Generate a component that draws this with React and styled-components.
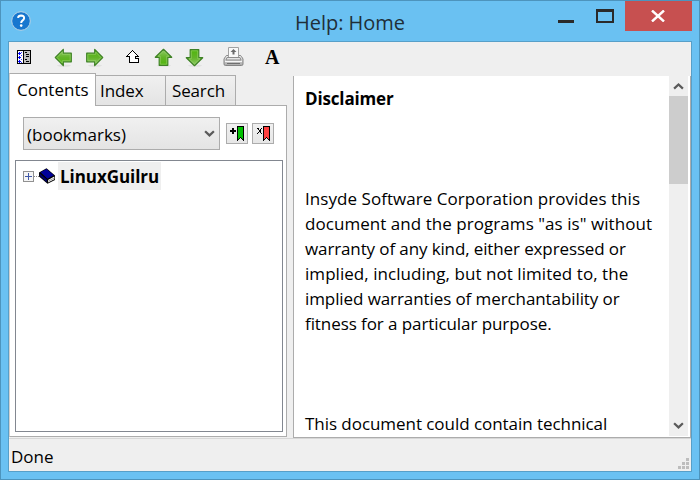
import React from 'react';
import styled, { createGlobalStyle } from 'styled-components';

const Global = createGlobalStyle`
  * { box-sizing: border-box; }
  html, body { margin: 0; padding: 0; }
  body { width: 700px; height: 480px; overflow: hidden; }
  svg { display: block; flex: none; }
`;

const Window = styled.div`
  width: 700px;
  height: 480px;
  display: flex;
  flex-direction: column;
  border: 1px solid #4d94bd;
  background: #6ac1f2;
  font-family: 'Open Sans', 'Noto Sans', sans-serif;
  font-size: 17px;
  color: #000;
`;

const TitleBar = styled.header`
  display: grid;
  grid-template-columns: 40px 1fr auto;
  height: 40px;
  padding: 0 7px 0 10px;
`;

const HelpIcon = styled.svg`
  margin-top: 9px;
`;

const Title = styled.h1`
  margin: 0;
  padding: 8px 0 0 244px;
  font-size: 20px;
  font-weight: 400;
  line-height: 27px;
  letter-spacing: -0.02px;
  color: #1f2f38;
  white-space: nowrap;
`;

const WindowButtons = styled.div`
  display: flex;
`;

const MinimizeMark = styled.span`
  width: 16px;
  height: 3px;
  margin: 19px 22px 0 0;
  background: #2a2a2a;
`;

const MaximizeMark = styled.span`
  width: 18px;
  height: 14px;
  margin: 8px 11px 0 0;
  border: 2px solid #2a2a2a;
  border-top-width: 3px;
`;

const CloseButton = styled.button`
  width: 67px;
  height: 30px;
  display: flex;
  justify-content: center;
  padding: 9px 1px 0 0;
  border: 0;
  background: #c75050;
`;

const Client = styled.main`
  flex: 1;
  display: flex;
  flex-direction: column;
  margin: 0 7px 7px;
  border: 1px solid #579fc8;
  background: #efefef;
`;

const Toolbar = styled.nav`
  height: 31px;
  display: flex;
  align-items: center;
  padding-left: 8px;
`;

const Tool = styled.span`
  display: flex;
  margin-right: ${(p) => p.$gap}px;
  padding-bottom: ${(p) => p.$raise || 0}px;
`;

const Workspace = styled.div`
  height: 365px;
  display: flex;
  gap: 6px;
`;

const Sidebar = styled.section`
  width: 278px;
  display: flex;
  flex-direction: column;
`;

const Tabs = styled.div`
  height: 32px;
  display: flex;
  align-items: flex-end;
`;

const Tab = styled.button`
  width: ${(p) => p.$width}px;
  height: ${(p) => (p.$active ? 33 : 30)}px;
  margin: 0 0 ${(p) => (p.$active ? -1 : 0)}px ${(p) => (p.$joined ? -1 : 0)}px;
  padding: 0 0 0 ${(p) => p.$inset}px;
  border: 1px solid #acacac;
  border-bottom: 0;
  border-left-color: ${(p) => (p.$active ? '#d0d0d0' : '#acacac')};
  position: relative;
  background: ${(p) => (p.$active ? '#fff' : 'linear-gradient(#f0f0f0, #e4e4e4)')};
  font: inherit;
  line-height: ${(p) => (p.$active ? 30 : 30)}px;
  letter-spacing: ${(p) => p.$tracking || 0}px;
  text-align: left;
  color: #000;
`;

const TabPanel = styled.div`
  height: 332px;
  display: flex;
  flex-direction: column;
  padding: 11px 3px 4px 5px;
  border: 1px solid #acacac;
  border-left-color: #d0d0d0;
  background: #fff;
`;

const BookmarkBar = styled.div`
  height: 33px;
  display: flex;
  align-items: center;
  margin-left: 8px;
`;

const BookmarkSelect = styled.div`
  width: 197px;
  height: 33px;
  display: flex;
  align-items: center;
  justify-content: space-between;
  padding: 0 4px 0 3px;
  border: 1px solid #acacac;
  background: linear-gradient(#f0f0f0, #e4e4e4);
  line-height: 31px;
`;

const SelectValue = styled.span`
  padding-top: 2px;
`;

const BookmarkButton = styled.button`
  width: 22px;
  height: 21px;
  display: flex;
  padding: 2px 0 0 3px;
  margin-left: ${(p) => p.$gap}px;
  border: 1px solid #acacac;
  background: linear-gradient(#f0f0f0, #e6e6e6);
`;

const Tree = styled.div`
  flex: 1;
  margin-top: 10px;
  padding: 1px 0 0 7px;
  border: 1px solid #828790;
`;

const TreeRow = styled.div`
  height: 28px;
  display: flex;
  align-items: center;
`;

const Connector = styled.span`
  width: 5px;
  border-top: 1px dotted #888;
`;

const TreeLabel = styled.strong`
  height: 28px;
  width: 103px;
  margin-left: 3px;
  padding-left: 2px;
  background: #efefef;
  line-height: 30px;
  letter-spacing: -0.05px;
`;

const Reader = styled.section`
  width: 398px;
  height: 362px;
  margin-top: 3px;
  display: flex;
  border: solid #acacac;
  border-width: 0 1px 1px;
  overflow: hidden;
  background: #fff;
`;

const Article = styled.article`
  flex: 1;
  height: 361px;
  padding: 10px 0 0 11px;
  overflow: hidden;
`;

const Heading = styled.h2`
  margin: 0 0 75px;
  font-size: 17px;
  line-height: 25px;
  letter-spacing: -0.15px;
`;

const Paragraph = styled.p`
  margin: 0 0 75px;
`;

const Line = styled.span`
  display: block;
  height: 25px;
  line-height: 25px;
  letter-spacing: ${(p) => p.$tracking || 0}px;
  white-space: nowrap;
`;

const Scrollbar = styled.div`
  width: 19px;
  height: 360px;
  margin-right: 2px;
  display: flex;
  flex-direction: column;
  align-items: center;
  background: #efefef;
`;

const ScrollArrow = styled.span`
  height: 20px;
  display: flex;
  align-items: center;
  margin-top: ${(p) => (p.$end ? 'auto' : 0)};
  padding-bottom: ${(p) => (p.$end ? 2 : 0)}px;
`;

const Thumb = styled.span`
  width: 19px;
  height: 88px;
  background: #cdcdcd;
`;

const StatusBar = styled.footer`
  flex: 1;
  display: flex;
  justify-content: space-between;
  align-items: flex-end;
  padding: 0 2px 2px;
  border-top: 1px solid #d7d7d7;
  line-height: 25px;
`;

function Chevron({ up, color = '#5a5a5a' }) {
  return (
    <svg width="11" height="9" viewBox="0 0 11 9">
      <path d={up ? 'M1.1 6.6 5.5 2.4 9.9 6.6' : 'M1.1 2.2 5.5 6.4 9.9 2.2'} fill="none" stroke={color} strokeWidth="2.2" />
    </svg>
  );
}

function GreenArrow({ angle }) {
  const id = `leaf${angle}`;
  const vertical = angle % 180 !== 0;
  return (
    <svg width="19" height="19" viewBox="0 0 19 19">
      <defs>
        <linearGradient id={id} x1="0" y1="0" x2={vertical ? 1 : 0} y2={vertical ? 0 : 1}>
          <stop offset="0" stopColor="#8fcb68" />
          <stop offset="0.5" stopColor="#62b428" />
          <stop offset="1" stopColor="#4fb50c" />
        </linearGradient>
      </defs>
      <ellipse cx="10" cy="17.6" rx="7" ry="1.2" fill="#000" opacity="0.06" />
      <g transform={`rotate(${angle} 9.5 9.5)`}>
        <path d="M1.3 9.5 9.3 1.3V5.2H17.3V13.8H9.3V17.7Z" fill={`url(#${id})`} stroke="#3f8226" strokeWidth="1.2" strokeLinejoin="round" />
        <path d="M3 9.5 8.3 4V6.3H16.2V12.7H8.3V15Z" fill="none" stroke="#a0d474" strokeWidth="0.8" opacity="0.7" />
      </g>
    </svg>
  );
}

function PanelIcon() {
  return (
    <svg width="14" height="14" viewBox="0 0 14 14" shapeRendering="crispEdges">
      <path fill="#000" d="M0 0h14v14H0z" />
      <path fill="#fff" d="M1 1h5v12H1z" />
      <path fill="#c0c0c0" d="M7 1h6v12H7z" />
      <path fill="#0000ff" d="M2 2h1v3H2zM1 3h3v1H1zM2 6h1v3H2zM1 7h3v1H1zM2 10h1v3H2zM1 11h3v1H1z" />
      <path fill="#4040ff" d="M4 5h1v1H4zM4 9h1v1H4zM4 2h1v1H4zM4 12h1v1H4z" />
      <path fill="#000" d="M8 2h2v1H8zM9 4h3v1H9zM9 6h3v1H9zM8 9h2v1H8zM9 11h3v1H9z" />
    </svg>
  );
}

function UpLevelIcon() {
  return (
    <svg width="13" height="13" viewBox="0 0 13 13" shapeRendering="crispEdges">
      <path fill="#fff" d="M6 1h1v1H6zM5 2h3v1H5zM4 3h5v1H4zM3 4h7v1H3zM2 5h9v1H2zM4 6h5v6H4zM8 8h4v4H8z" />
      <path fill="#000" d="M6 0h1v1H6zM5 1h1v1H5zM7 1h1v1H7zM4 2h1v1H4zM8 2h1v1H8zM3 3h1v1H3zM9 3h1v1H9zM2 4h1v1H2zM10 4h1v1h-1zM1 5h1v1H1zM11 5h1v1h-1zM0 6h4v1H0zM9 6h4v1H9zM3 7h1v6H3zM9 7h1v1H9zM9 8h4v1H9zM12 8h1v5h-1zM4 12h8v1H4z" />
    </svg>
  );
}

function PrinterIcon() {
  return (
    <svg width="21" height="20" viewBox="0 0 21 20">
      <defs>
        <linearGradient id="printerBody" x1="0" y1="0" x2="0" y2="1">
          <stop offset="0" stopColor="#f0f0f0" />
          <stop offset="1" stopColor="#a8a8a8" />
        </linearGradient>
      </defs>
      <path d="M4 8.5h13q1 0 1.5 1l1.5 2.5v5q0 1.5-1.5 1.5h-16Q1 18.500 1 17v-5l1.500-2.500Q3 8.500 4 8.500z" fill="url(#printerBody)" stroke="#858585" />
      <path d="M5.500.5h10v10h-10z" fill="#f9f9f9" stroke="#a2a2a2" />
      <path d="M10.500 2 7.500 5h2v2.500h2V5h2z" fill="#6c6c6c" />
      <path d="M4 10.500h13l1 2.500H3z" fill="#e4e4e4" stroke="#8d8d8d" />
      <path d="M2 14.500h17" stroke="#f6f6f6" />
      <path d="M4 16.500h13" stroke="#6f6f6f" />
    </svg>
  );
}

const FontLetter = styled.span`
  font: bold 20px/20px 'Liberation Serif', serif;
  height: 20px;
`;

function BookIcon() {
  return (
    <svg width="16" height="16" viewBox="0 0 16 16">
      <path d="M0 4.500 7.500.3 16 7.500v4.500L8.500 15.800 0 8.500z" fill="#000" />
      <path d="M1.500 4.300 7.500 1 14.800 7.200 8.500 10.800z" fill="#00009a" />
      <path d="M.8 5.500 7.800 11.600V14.200L.8 8z" fill="#00006c" />
      <path d="M9 12 15.300 8.600V11.300L9 14.600z" fill="#fff" />
      <path d="M9 13.300 15.300 10" stroke="#777" strokeWidth=".7" />
    </svg>
  );
}

function ExpandIcon() {
  return (
    <svg width="11" height="11" viewBox="0 0 11 11" shapeRendering="crispEdges">
      <rect x="0.5" y="0.5" width="10" height="10" fill="#f5f5f5" stroke="#919191" />
      <path d="M2 5h7v1H2zM5 2h1v7H5z" fill="#4058a8" />
    </svg>
  );
}

function BookmarkIcon({ remove }) {
  return (
    <svg width="16" height="16" viewBox="0 0 16 16" shapeRendering="crispEdges">
      {remove ? (
        <path fill="#000" d="M1 2h2v1H1zM5 2h1v1H5zM2 3h1v1H2zM4 3h1v1H4zM3 4h2v2H3zM2 6h1v1H2zM4 6h1v1H4zM1 7h1v1H1zM5 7h1v1H5z" />
      ) : (
        <path fill="#000" d="M0 4h6v2H0zM2 2h2v6H2z" />
      )}
      <path fill="#000" d="M7 0h7v15h-1v-1h-1v-1h-1v-1h-1v1H9v1H8v1H7z" />
      <path fill={remove ? '#ff4040' : '#00c000'} d="M8 1h5v12h-1v-1h-1v-1h-1v1H9v1H8z" />
    </svg>
  );
}

function SizeGrip() {
  return (
    <svg width="11" height="11" viewBox="0 0 11 11" shapeRendering="crispEdges">
      <path fill="#bdbdbd" d="M8 0h3v3H8zM4 4h3v3H4zM8 4h3v3H8zM0 8h3v3H0zM4 8h3v3H4zM8 8h3v3H8z" />
    </svg>
  );
}

export default function App() {
  return (
    <Window>
      <Global />
      <TitleBar>
        <HelpIcon width="20" height="22" viewBox="0 0 20 22">
          <circle cx="10" cy="11" r="9.3" fill="#1777cf" stroke="#b9d5e6" strokeWidth="1" />
          <path d="M7 7.8Q7.4 5.5 10.1 5.4 13.3 5.5 13.1 8.2 13 9.5 11.4 10.6 10.1 11.5 10.2 13" fill="none" stroke="#fff" strokeWidth="2" />
          <circle cx="10.2" cy="15.6" r="1.3" fill="#fff" />
        </HelpIcon>
        <Title>Help: Home</Title>
        <WindowButtons>
          <MinimizeMark />
          <MaximizeMark />
          <CloseButton aria-label="Close">
            <svg width="14" height="12" viewBox="0 0 14 12">
              <path d="M1 0.5 13 11.5M13 0.5 1 11.5" stroke="#fff" strokeWidth="2.4" />
            </svg>
          </CloseButton>
        </WindowButtons>
      </TitleBar>
      <Client>
        <Toolbar>
          <Tool $gap={23} $raise={1}><PanelIcon /></Tool>
          <Tool $gap={12} $raise={1}><GreenArrow angle={0} /></Tool>
          <Tool $gap={22} $raise={1}><GreenArrow angle={180} /></Tool>
          <Tool $gap={15} $raise={2}><UpLevelIcon /></Tool>
          <Tool $gap={12}><GreenArrow angle={90} /></Tool>
          <Tool $gap={19} $raise={1}><GreenArrow angle={270} /></Tool>
          <Tool $gap={21} $raise={1}><PrinterIcon /></Tool>
          <Tool $gap={0} $raise={2}><FontLetter>A</FontLetter></Tool>
        </Toolbar>
        <Workspace>
          <Sidebar>
            <Tabs>
              <Tab $active $width={87} $inset={7}>Contents</Tab>
              <Tab $joined $width={71} $inset={4} $tracking={-0.1}>Index</Tab>
              <Tab $joined $width={71} $inset={6} $tracking={-0.15}>Search</Tab>
            </Tabs>
            <TabPanel>
              <BookmarkBar>
                <BookmarkSelect>
                  <SelectValue>(bookmarks)</SelectValue>
                  <Chevron />
                </BookmarkSelect>
                <BookmarkButton $gap={6} aria-label="Add bookmark"><BookmarkIcon /></BookmarkButton>
                <BookmarkButton $gap={4} aria-label="Remove bookmark"><BookmarkIcon remove /></BookmarkButton>
              </BookmarkBar>
              <Tree>
                <TreeRow>
                  <ExpandIcon />
                  <Connector />
                  <BookIcon />
                  <TreeLabel>LinuxGuilru</TreeLabel>
                </TreeRow>
              </Tree>
            </TabPanel>
          </Sidebar>
          <Reader>
            <Article>
              <Heading>Disclaimer</Heading>
              <Paragraph>
                <Line $tracking={0.05}>Insyde Software Corporation provides this</Line>
                <Line $tracking={0.05}>document and the programs "as is" without</Line>
                <Line $tracking={-0.12}>warranty of any kind, either expressed or</Line>
                <Line $tracking={0.05}>implied, including, but not limited to, the</Line>
                <Line $tracking={-0.09}>implied warranties of merchantability or</Line>
                <Line $tracking={-0.08}>fitness for a particular purpose.</Line>
              </Paragraph>
              <Paragraph>
                <Line $tracking={-0.05}>This document could contain technical</Line>
              </Paragraph>
            </Article>
            <Scrollbar>
              <ScrollArrow><Chevron up /></ScrollArrow>
              <Thumb />
              <ScrollArrow $end><Chevron /></ScrollArrow>
            </Scrollbar>
          </Reader>
        </Workspace>
        <StatusBar>
          <span>Done</span>
          <SizeGrip />
        </StatusBar>
      </Client>
    </Window>
  );
}
